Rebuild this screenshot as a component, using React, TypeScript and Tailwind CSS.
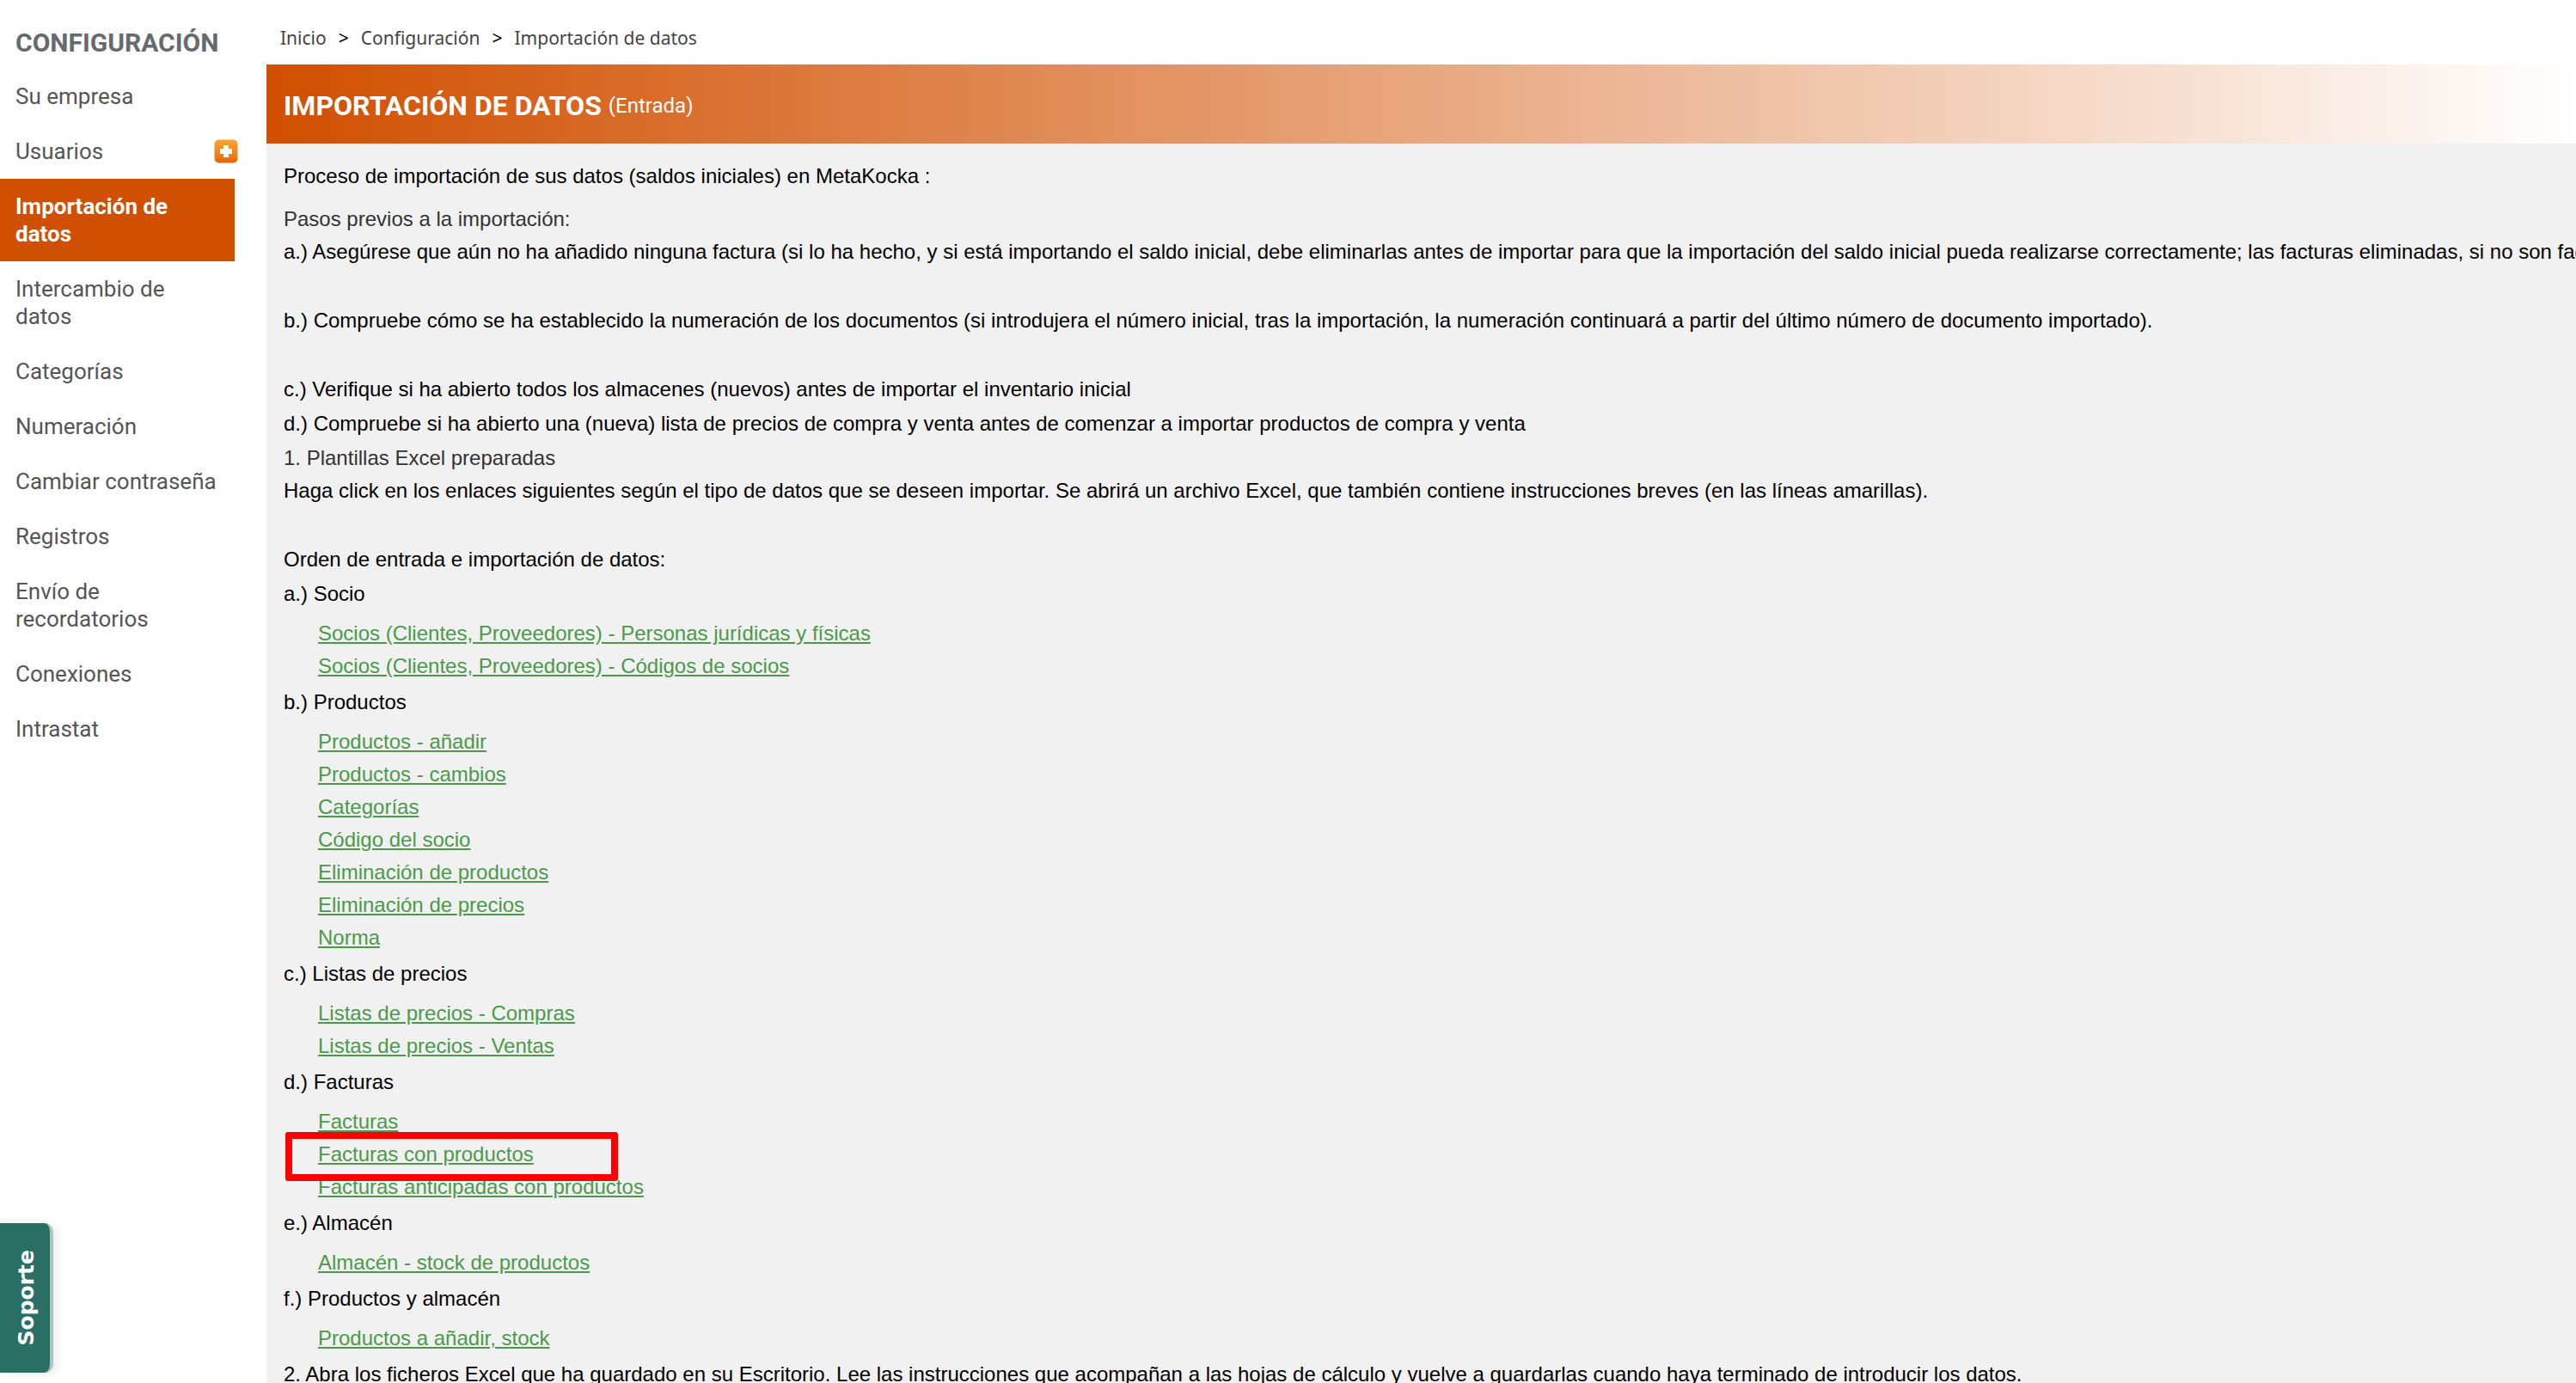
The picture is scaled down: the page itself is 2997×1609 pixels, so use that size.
const menu = [
  { label: "Su empresa" },
  { label: "Usuarios", plus: true },
  { label: "Importación de datos", active: true },
  { label: "Intercambio de datos" },
  { label: "Categorías" },
  { label: "Numeración" },
  { label: "Cambiar contraseña" },
  { label: "Registros" },
  { label: "Envío de recordatorios" },
  { label: "Conexiones" },
  { label: "Intrastat" },
];

function PlusBadge() {
  return (
    <svg className="absolute left-[249px] top-[18px]" width="28" height="28" viewBox="0 0 28 28">
      <defs>
        <linearGradient id="plusFill" x1="0" y1="0" x2="0" y2="1">
          <stop offset="0" stopColor="#f8a537" />
          <stop offset="0.75" stopColor="#ee7a12" />
          <stop offset="1" stopColor="#e85f0a" />
        </linearGradient>
      </defs>
      <rect x="0.5" y="0.5" width="27" height="27" rx="5" fill="url(#plusFill)" />
      <path d="M11 7h6v4h4v6h-4v4h-6v-4H7v-6h4z" fill="#fff" />
    </svg>
  );
}

function Sidebar() {
  return (
    <aside className="w-[310px] shrink-0 font-['Roboto',sans-serif]">
      <h2 className="h-[80px] pl-[18px] pt-[30px] text-[30px] leading-[40px] font-bold text-[#666a6d]">CONFIGURACIÓN</h2>
      <nav className="w-[273px]">
        {menu.map((item) => (
          <a
            key={item.label}
            href="#"
            className={
              item.active
                ? "block py-4 pl-[18px] pr-4 text-[26px] leading-[32px] font-bold text-white bg-[#d14f00]"
                : "relative block py-4 pl-[18px] pr-4 text-[26px] leading-[32px] text-[#555555]"
            }
          >
            {item.label}
            {item.plus && <PlusBadge />}
          </a>
        ))}
      </nav>
    </aside>
  );
}

function Breadcrumb() {
  return (
    <div className="flex h-[75px] items-center gap-[14px] pl-[16px] pt-[14px] text-[21px] text-[#444444]">
      <span>Inicio</span>
      <span className="text-black">&gt;</span>
      <span>Configuración</span>
      <span className="text-black">&gt;</span>
      <span>Importación de datos</span>
    </div>
  );
}

function Links({ items }: { items: string[] }) {
  return (
    <ul className="mt-[7px] mb-[3px] pl-[40px]">
      {items.map((item) => (
        <li key={item} className="h-[38px] leading-[38px]">
          <a href="#" className="underline text-[#4a9a4a]">{item}</a>
        </li>
      ))}
    </ul>
  );
}

function Content() {
  return (
    <div className="relative flex-1 bg-[#f1f1f1] px-5 pt-[18px] font-['Liberation_Sans',Arial,sans-serif] text-[24px] leading-[40px] text-black whitespace-nowrap overflow-hidden">
      <p className="mb-[12px]">Proceso de importación de sus datos (saldos iniciales) en MetaKocka :</p>
      <p className="text-[#333333] leading-[36px]">Pasos previos a la importación:</p>
      <p>a.) Asegúrese que aún no ha añadido ninguna factura (si lo ha hecho, y si está importando el saldo inicial, debe eliminarlas antes de importar para que la importación del saldo inicial pueda realizarse correctamente; las facturas eliminadas, si no son facturadas, no se tienen en cuenta)</p>
      <br />
      <p>b.) Compruebe cómo se ha establecido la numeración de los documentos (si introdujera el número inicial, tras la importación, la numeración continuará a partir del último número de documento importado).</p>
      <br />
      <p>c.) Verifique si ha abierto todos los almacenes (nuevos) antes de importar el inventario inicial</p>
      <p>d.) Compruebe si ha abierto una (nueva) lista de precios de compra y venta antes de comenzar a importar productos de compra y venta</p>
      <p className="text-[#333333]">1. Plantillas Excel preparadas</p>
      <p className="mt-[-2px]">Haga click en los enlaces siguientes según el tipo de datos que se deseen importar. Se abrirá un archivo Excel, que también contiene instrucciones breves (en las líneas amarillas).</p>
      <br />
      <p>Orden de entrada e importación de datos:</p>
      <p>a.) Socio</p>
      <Links items={["Socios (Clientes, Proveedores) - Personas jurídicas y físicas", "Socios (Clientes, Proveedores) - Códigos de socios"]} />
      <p>b.) Productos</p>
      <Links items={["Productos - añadir", "Productos - cambios", "Categorías", "Código del socio", "Eliminación de productos", "Eliminación de precios", "Norma"]} />
      <p>c.) Listas de precios</p>
      <Links items={["Listas de precios - Compras", "Listas de precios - Ventas"]} />
      <p>d.) Facturas</p>
      <Links items={["Facturas", "Facturas con productos", "Facturas anticipadas con productos"]} />
      <p>e.) Almacén</p>
      <Links items={["Almacén - stock de productos"]} />
      <p>f.) Productos y almacén</p>
      <Links items={["Productos a añadir, stock"]} />
      <p>2. Abra los ficheros Excel que ha guardado en su Escritorio. Lee las instrucciones que acompañan a las hojas de cálculo y vuelve a guardarlas cuando haya terminado de introducir los datos.</p>
      {/* red highlight drawn over the screenshot */}
      <div className="absolute left-[22px] top-[1150px] h-[57px] w-[387px] rounded-[3px] border-[8px] border-[#ff0000]" />
    </div>
  );
}

export default function App() {
  return (
    <div className="relative flex h-[1609px] w-[2997px] overflow-hidden bg-white">
      <Sidebar />
      <main className="flex min-w-0 flex-1 flex-col">
        <Breadcrumb />
        <div className="flex h-[92px] shrink-0 items-center gap-2 bg-[linear-gradient(to_right,#d14f00,#ffffff)] pl-5 pt-[3px] font-['Roboto',sans-serif] text-white">
          <span className="text-[32px] font-bold">IMPORTACIÓN DE DATOS</span>
          <span className="text-[24px]">(Entrada)</span>
        </div>
        <Content />
      </main>
      {/* floating support tab */}
      <div className="absolute bottom-[12px] left-0 flex h-[174px] w-[62px] items-center justify-center rounded-r-[10px] border-r-[4px] border-[#a9c8c4] bg-[#2a6f64] pl-[3px] shadow-[4px_2px_10px_rgba(0,0,0,0.08)]">
        <span className="rotate-180 font-['DejaVu_Sans',sans-serif] text-[25px] font-bold text-white [writing-mode:vertical-rl]">Soporte</span>
      </div>
    </div>
  );
}
